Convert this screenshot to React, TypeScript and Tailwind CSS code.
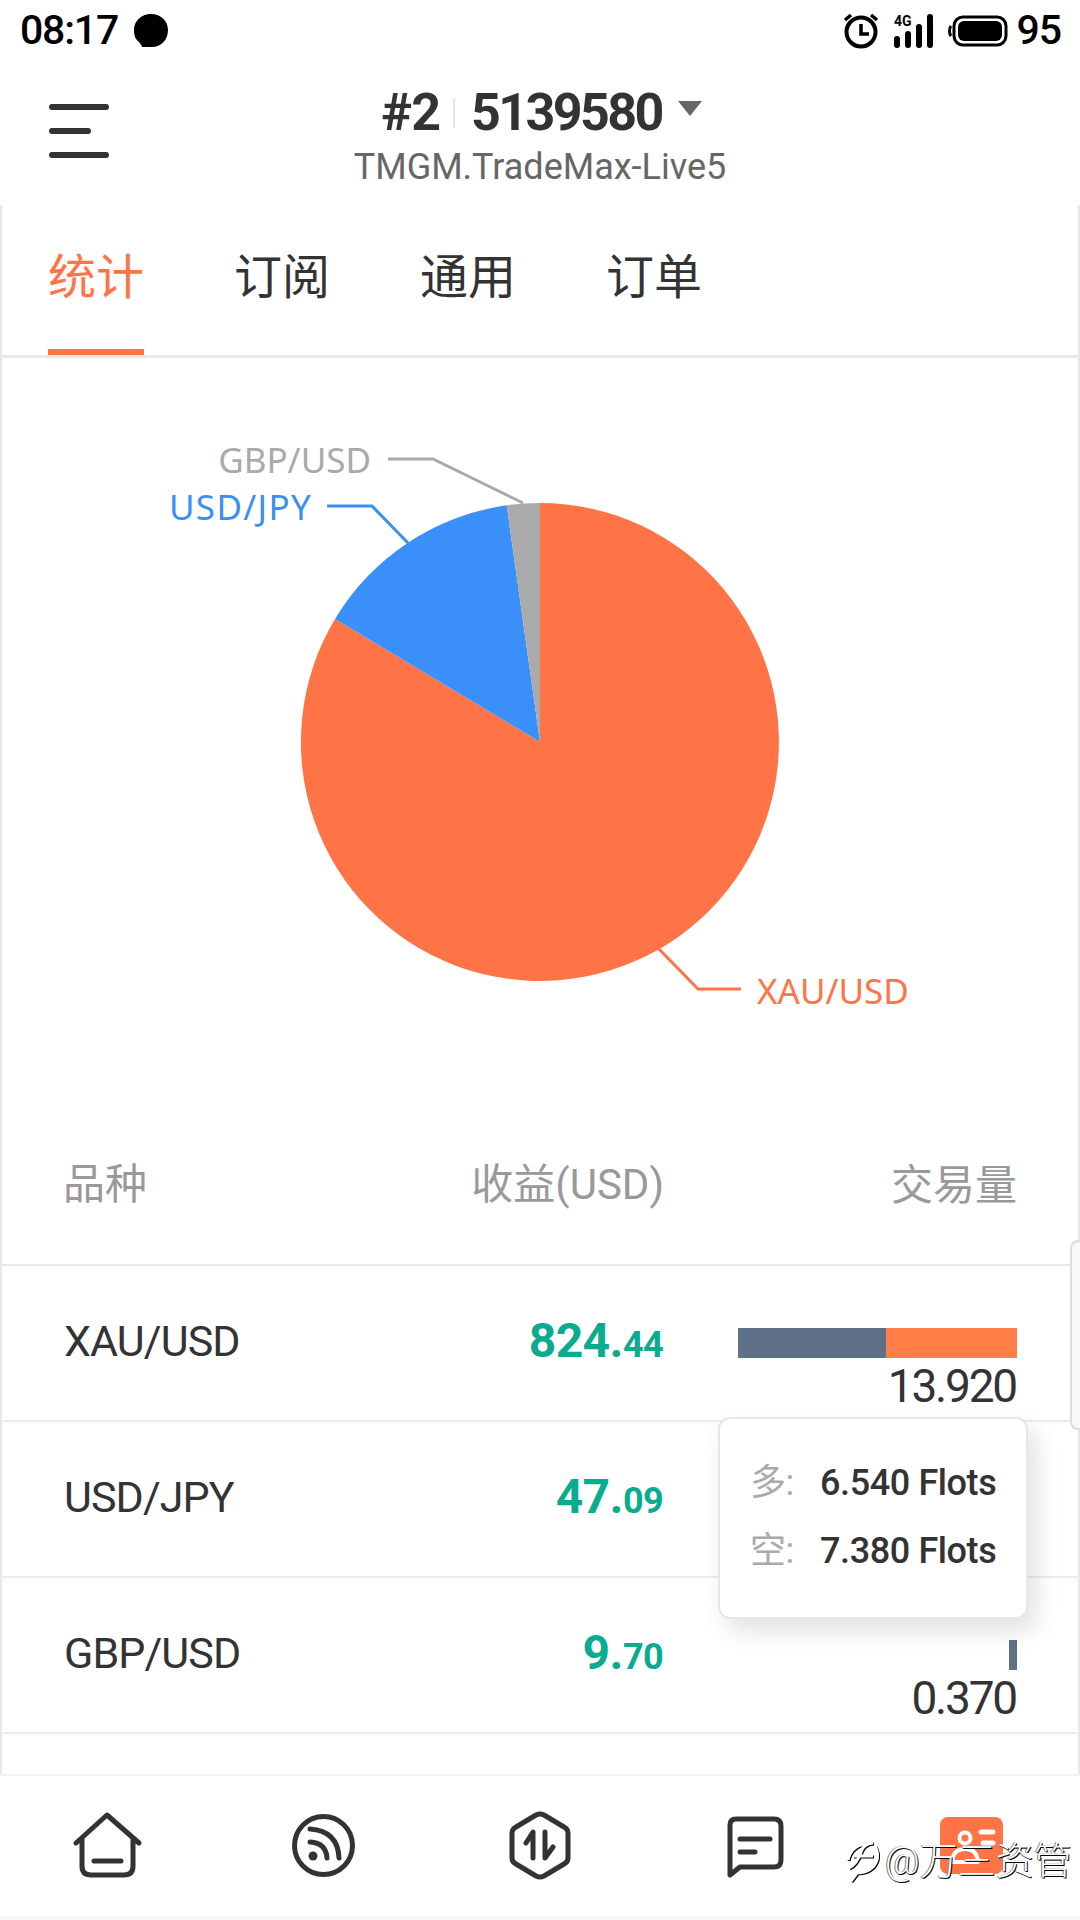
const sans = "font-['Roboto','Noto_Sans_CJK_SC',sans-serif]";

function Row({ name, int, dec, bar, total }: { name: string; int: string; dec: string; bar: React.ReactNode; total: string }) {
  return (
    <div className="flex h-[156px] items-start border-b-2 border-[#ececec] pl-[62px] pr-[61px]">
      <div className="mt-[45px] w-[300px] text-[43px] leading-[60px] tracking-[-0.9px] text-[#333]">{name}</div>
      <div className="mt-[45px] w-[299px] whitespace-nowrap text-right font-bold leading-[60px] tracking-[-0.6px] text-[#0aab8e]">
        <span className="text-[48px]">{int}.</span>
        <span className="text-[36px]">{dec}</span>
      </div>
      <div className="flex flex-1 flex-col items-end pt-[62px]">
        <div className="flex h-[30px]">{bar}</div>
        <div className="mr-[1px] mt-[3px] text-[46px] leading-[50px] tracking-[-2.2px] text-[#333]">{total}</div>
      </div>
    </div>
  );
}

function Tab({ label, active }: { label: string; active?: boolean }) {
  return (
    <div className={`flex h-[150px] w-[96px] items-center justify-center border-b-[6px] pt-[2px] text-[48px] ${active ? "border-[#ff7446] text-[#ff7446]" : "border-transparent text-[#333]"}`}>
      {label}
    </div>
  );
}

export default function App() {
  return (
    <div className={`relative h-[1920px] w-[1080px] overflow-hidden bg-white ${sans}`}>
      {/* status bar */}
      <div className="flex h-[60px] items-center justify-between pl-[20px] pr-[19px] pt-[1px] text-black">
        <div className="flex items-center">
          <span className="text-[41px] font-medium leading-none tracking-[-1.2px]">08:17</span>
          <svg width="36" height="36" viewBox="0 0 36 36" className="ml-[15px]">
            <path d="M18 1C28 1 35 8 35 17C35 27 28 34 19 34L9 34C9 32 7 31 6 29C2 26 1 22 1 17C1 8 8 1 18 1Z" fill="#000" />
          </svg>
        </div>
        <div className="flex items-center">
          <svg width="40" height="36" viewBox="0 0 40 36" fill="none" stroke="#000">
            <circle cx="20" cy="19" r="14.5" strokeWidth="4" />
            <path d="M20 11V21H28" strokeWidth="3.5" />
            <path d="M4 7L10 2M36 7L30 2" strokeWidth="3.5" />
          </svg>
          <svg width="46" height="36" viewBox="0 0 46 36" className="ml-[13px]">
            <text x="0" y="13" fontSize="14" fontWeight="700" fill="#000">4G</text>
            <rect x="0" y="23" width="6" height="12" rx="3" />
            <rect x="11" y="18" width="6" height="17" rx="3" />
            <rect x="22" y="11" width="6" height="24" rx="3" />
            <rect x="33" y="1" width="6" height="34" rx="3" />
          </svg>
          <svg width="60" height="32" viewBox="0 0 60 32" className="ml-[8px]" fill="none">
            <rect x="6" y="2" width="52" height="28" rx="9" stroke="#000" strokeWidth="3" />
            <rect x="10" y="6" width="44" height="20" rx="6" fill="#000" />
            <path d="M3 11C1 13 1 19 3 21" stroke="#000" strokeWidth="3" />
          </svg>
          <span className="ml-[8px] text-[41px] font-medium leading-none tracking-[-1px]">95</span>
        </div>
      </div>

      {/* header */}
      <div className="relative flex h-[145px] flex-col items-center">
        <div className="absolute left-[49px] top-[44px] flex flex-col gap-[18px]">
          <div className="h-[6px] w-[60px] rounded-full bg-[#333]" />
          <div className="h-[6px] w-[42px] rounded-full bg-[#333]" />
          <div className="h-[6px] w-[60px] rounded-full bg-[#333]" />
        </div>
        <div className="ml-[3px] mt-[18px] flex items-center text-[52px] font-bold leading-[70px] tracking-[-2.6px] text-[#333]">
          <span className="tracking-[-1px]">#2</span>
          <span className="ml-[13px] mr-[16px] h-[30px] w-[2px] bg-[#e5e5e5]" />
          <span>5139580</span>
          <svg width="24" height="15" viewBox="0 0 24 15" className="ml-[16px] mb-[10px]">
            <path d="M0 0H24L12 15Z" fill="#666" />
          </svg>
        </div>
        <div className="mt-[-4px] text-[36px] leading-[46px] text-[#666]">TMGM.TradeMax-Live5</div>
      </div>

      {/* main column */}
      <div className="h-[1569px] overflow-hidden border-x-2 border-[#e8e8e8]">
        <div className="flex h-[153px] gap-[90px] border-b-[3px] border-[#e8e8e8] pl-[46px]">
          <Tab label="统计" active />
          <Tab label="订阅" />
          <Tab label="通用" />
          <Tab label="订单" />
        </div>

        {/* pie */}
        <svg width="1076" height="762" viewBox="2 358 1076 762" className="block">
          <path d="M540 742 L540 503 A239 239 0 1 1 335 619 Z" fill="#ff7446" />
          <path d="M540 742 L335 619 A239 239 0 0 1 506.7 505.3 Z" fill="#3a8ff8" />
          <path d="M540 742 L506.7 505.3 A239 239 0 0 1 540 503 Z" fill="#aaaaaa" />
          <path d="M388 459H433L523 503" fill="none" stroke="#aaaaaa" strokeWidth="3" />
          <path d="M327 506H372L408 543" fill="none" stroke="#3a8ff0" strokeWidth="3" />
          <path d="M659 949L698 989H741" fill="none" stroke="#ff7446" strokeWidth="3" />
          <text x="371" y="473" textAnchor="end" fontSize="35" fill="#aaaaaa" fontFamily="Noto Sans">GBP/USD</text>
          <text x="312" y="520" textAnchor="end" fontSize="35" letterSpacing="1.3" fill="#3a8ff0" fontFamily="Noto Sans">USD/JPY</text>
          <text x="757" y="1004" fontSize="35" fill="#ff7446" fontFamily="Noto Sans">XAU/USD</text>
        </svg>

        {/* table */}
        <div className="flex h-[146px] border-b-2 border-[#e8e8e8] pl-[61px] pr-[61px] pt-[35px] text-[42px] leading-[60px] text-[#999]">
          <div className="w-[301px]">品种</div>
          <div className="w-[300px] text-right">收益(USD)</div>
          <div className="flex-1 pt-[1px] text-right">交易量</div>
        </div>
        <Row name="XAU/USD" int="824" dec="44" total="13.920" bar={<><div className="w-[148px] bg-[#5f7089]" /><div className="w-[131px] bg-[#ff7d47]" /></>} />
        <Row name="USD/JPY" int="47" dec="09" total="" bar={null} />
        <Row name="GBP/USD" int="9" dec="70" total="0.370" bar={<div className="w-[8px] bg-[#5f7089]" />} />
      </div>

      {/* tooltip */}
      <div className="absolute left-[718px] top-[1417px] h-[202px] w-[310px] rounded-[12px] border-2 border-[#e6e6e6] bg-white pl-[30px] pt-[30px] shadow-[8px_12px_24px_rgba(0,0,0,0.12)]">
        <div className="flex h-[68px] items-center text-[36px] font-medium tracking-[-0.4px] text-[#333]">
          <span className="w-[70px] font-normal text-[#aaa]">多:</span>
          <span>6.540 Flots</span>
        </div>
        <div className="flex h-[68px] items-center text-[36px] font-medium tracking-[-0.4px] text-[#333]">
          <span className="w-[70px] font-normal text-[#aaa]">空:</span>
          <span>7.380 Flots</span>
        </div>
      </div>

      {/* scroll handle */}
      <div className="absolute right-0 top-[1240px] h-[190px] w-[10px] rounded-l-[8px] border-y-2 border-l-2 border-[#ddd] bg-[#f8f8f8]" />

      {/* bottom nav */}
      <div className="relative flex h-[142px] items-start border-t-2 border-[#f2f2f2] bg-white">
        <svg width="1080" height="140" viewBox="0 1776 1080 140" fill="none" stroke="#333" strokeWidth="5" strokeLinecap="round" strokeLinejoin="round" className="block">
          {/* home */}
          <path d="M76 1843L107 1815L139 1843M82 1838V1866Q82 1875 91 1875H124Q133 1875 133 1866V1838" />
          <path d="M94 1861H121" />
          {/* feed */}
          <circle cx="323.5" cy="1845.5" r="29" />
          <circle cx="313" cy="1856" r="4.5" fill="#333" stroke="none" />
          <path d="M310 1842Q326 1843 327 1858" />
          <path d="M310 1829Q338 1831 339 1858" />
          {/* exchange */}
          <path d="M536 1815Q540 1813 544 1815L564 1827Q568 1829 568 1833V1858Q568 1862 564 1864L544 1876Q540 1878 536 1876L516 1864Q512 1862 512 1858V1833Q512 1829 516 1827Z" />
          <path d="M533 1858V1832L526 1843" />
          <path d="M545 1832V1858L553 1847" />
          {/* chat */}
          <path d="M736 1819H774Q781 1819 781 1826V1860Q781 1867 774 1867H740L730 1875V1825Q730 1819 736 1819Z" />
          <path d="M740 1839H770" />
          <path d="M740 1852H755" />
          {/* me */}
          <rect x="940" y="1817" width="63" height="57" rx="8" fill="#ff7446" stroke="none" />
          <circle cx="965" cy="1838" r="5.5" stroke="#fff" strokeWidth="4" />
          <path d="M952 1862Q953 1849 965 1849Q977 1849 978 1862Z" stroke="#fff" strokeWidth="4" />
          <path d="M981 1832H993M983 1843H993" stroke="#fff" />
        </svg>
        <div className="absolute left-[843px] top-[62px] flex items-center text-[38px] font-light leading-[44px] text-white [text-shadow:1px_1px_0_#000,-1px_0_0_#777,0_1px_0_#777]">
          <svg width="42" height="46" viewBox="0 0 42 46" fill="none" stroke="#fff" strokeWidth="3" className="drop-shadow-[1px_1px_0_#000]">
            <path d="M6 30Q14 26 18 14Q20 6 30 5" />
            <path d="M5 22Q8 8 22 6" />
            <path d="M32 8Q38 20 30 29Q24 35 14 35L8 43" />
            <path d="M10 18H30" />
          </svg>
          <span>@万三资管</span>
        </div>
      </div>
      <div className="h-[4px] bg-[#f8f8f8]" />
    </div>
  );
}
